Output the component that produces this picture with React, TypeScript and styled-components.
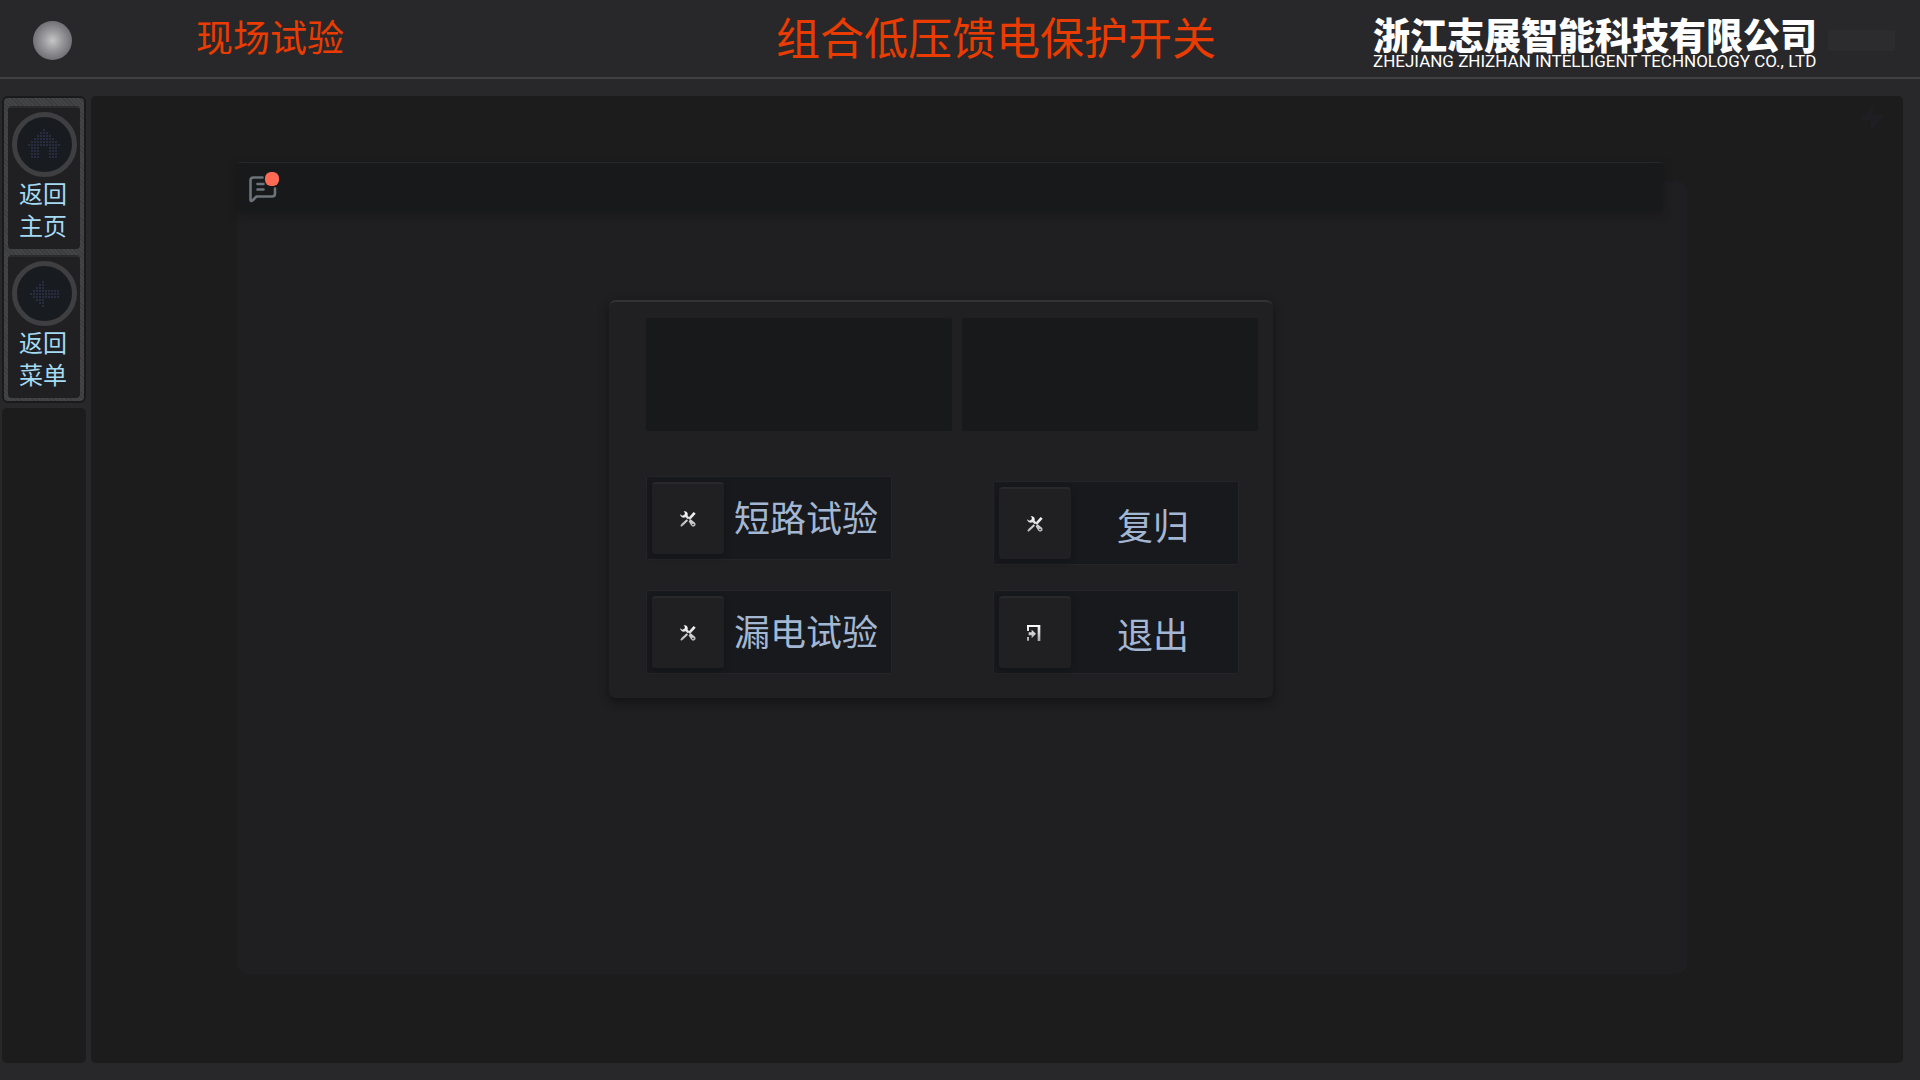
import React from "react";
import styled, { createGlobalStyle } from "styled-components";

const GlobalStyle = createGlobalStyle`
  * { box-sizing: border-box; }
  body {
    margin: 0;
    background: #28282a;
    font-family: "Noto Sans CJK SC", sans-serif;
  }
  button { font: inherit; color: inherit; cursor: pointer; }
`;

const Page = styled.div`
  display: flex;
  flex-direction: column;
  min-height: 100vh;
`;

const Header = styled.header`
  display: flex;
  align-items: center;
  height: 79px;
  padding: 3px 25px 0 33px;
  border-bottom: 2px solid #404042;
  white-space: nowrap;
`;

const StatusLamp = styled.span`
  width: 39px;
  height: 39px;
  border-radius: 50%;
  background: radial-gradient(circle, #c6c6c8 0%, #99999c 35%, #505056 100%);
`;

const SectionTitle = styled.h2`
  margin: 0 0 0 124px;
  padding-bottom: 8px;
  font-size: 37px;
  line-height: 48px;
  font-weight: 400;
  color: #ea3b00;
`;

const MainTitle = styled.h1`
  margin: 0 157px 0 auto;
  padding-bottom: 8px;
  font-size: 44px;
  line-height: 56px;
  font-weight: 400;
  color: #ea3b00;
`;

const Company = styled.div`
  display: flex;
  flex-direction: column;
  width: 441px;
  padding-top: 5px;
  color: #ffffff;
`;

const CompanyName = styled.span`
  font-size: 37px;
  line-height: 37px;
  font-weight: 900;
`;

const CompanyLatin = styled.span`
  font-family: Roboto, sans-serif;
  font-size: 17px;
  line-height: 17px;
  font-weight: 400;
`;

const ClockSlot = styled.div`
  width: 67px;
  height: 21px;
  margin-left: 14px;
  background: #2c2c2e;
`;

const Body = styled.div`
  display: flex;
  flex: 1;
  gap: 5px;
  padding: 17px 17px 17px 2px;
`;

const Sidebar = styled.aside`
  display: flex;
  flex-direction: column;
  gap: 5px;
  width: 84px;
`;

const Nav = styled.nav`
  display: flex;
  flex-direction: column;
  gap: 6px;
  padding: 8px 4px 3px;
  border: 2px solid #1a1a1b;
  border-radius: 6px;
  background: repeating-linear-gradient(45deg, #3a3b3c 0 1px, #434446 1px 3px);
`;

const NavButton = styled.button`
  display: flex;
  flex-direction: column;
  align-items: center;
  height: 143px;
  padding: 4px 0 0;
  border: 0;
  border-top: 2px solid #2b2b2d;
  border-radius: 4px;
  background: #202022;
`;

const NavDisc = styled.span`
  display: flex;
  align-items: center;
  justify-content: center;
  width: 65px;
  height: 65px;
  border: 5px solid #3f3f41;
  border-radius: 50%;
  background: #181b20;
`;

const NavLabel = styled.span`
  padding-right: 2px;
  font-size: 24px;
  line-height: 32px;
  color: #a5daf3;
`;

const SidebarRest = styled.div`
  flex: 1;
  border-radius: 5px;
  background: #1c1c1c;
`;

const Main = styled.main`
  position: relative;
  display: flex;
  flex-direction: column;
  flex: 1;
  padding: 66px 216px 89px 146px;
  border-radius: 5px;
  background: #1c1c1c;
`;

const BoltMark = styled.svg`
  position: absolute;
  top: 9px;
  right: 18px;
`;

const MessageBar = styled.div`
  z-index: 1;
  display: flex;
  align-items: flex-start;
  height: 49px;
  margin-right: 24px;
  padding: 8px 12px;
  border-top: 1px solid #24272b;
  border-radius: 3px;
  background: #17191b;
  box-shadow: 0 4px 8px rgba(20, 20, 22, 0.5);
`;

const MessageButton = styled.button`
  display: flex;
  padding: 0;
  border: 0;
  background: none;
`;

const Card = styled.section`
  display: flex;
  flex: 1;
  align-items: flex-start;
  margin-top: -30px;
  padding: 119px 414px 119px 372px;
  border-radius: 10px;
  background: #1f1f21;
`;

const Dialog = styled.div`
  flex: 1;
  padding: 16px 15px 24px 37px;
  border-top: 2px solid #333336;
  border-radius: 7px;
  background: #202022;
  box-shadow: 0 4px 10px rgba(14, 14, 16, 0.7);
`;

const Readouts = styled.div`
  display: grid;
  grid-template-columns: 306fr 296fr;
  gap: 10px;
`;

const Readout = styled.div`
  height: 113px;
  border-radius: 2px;
  background: #18191b;
`;

const Actions = styled.div`
  display: flex;
  align-items: flex-end;
  justify-content: space-between;
  margin-top: 45px;
  padding-right: 19px;
`;

const ActionColumn = styled.div<{ $gap: number }>`
  display: flex;
  flex-direction: column;
  gap: ${(p) => p.$gap}px;
`;

const ActionButton = styled.button`
  display: flex;
  align-items: center;
  width: 246px;
  height: 84px;
  padding: 0 5px;
  border: 1px solid #252528;
  border-radius: 2px;
  background: #18191d;
`;

const ActionIcon = styled.span`
  display: flex;
  align-items: center;
  justify-content: center;
  width: 72px;
  height: 72px;
  border-top: 2px solid #29292b;
  border-radius: 4px;
  background: #202022;
  box-shadow: 0 3px 6px rgba(14, 14, 16, 0.4);
`;

const ActionLabel = styled.span<{ $low?: boolean }>`
  flex: 1;
  padding: ${(p) => (p.$low ? "2px 0 0 2px" : "0 0 4px 2px")};
  font-size: 36px;
  line-height: 48px;
  text-align: center;
  white-space: nowrap;
  color: #a3b7d2;
`;

const HOME_DOTS = [
  "     #     ",
  "    ###    ",
  "   #####   ",
  "  #######  ",
  " ######### ",
  "###########",
  " ###   ### ",
  " ###   ### ",
  " ###   ### ",
  " ###   ### ",
  "           ",
];

const ARROW_DOTS = [
  "    #     ",
  "   ##     ",
  "  ###     ",
  " #########",
  "##########",
  " #########",
  "  ###     ",
  "   ##     ",
  "    #     ",
];

function DotIcon({ rows }: { rows: string[] }) {
  const w = rows[0].length * 3 - 1;
  const h = rows.length * 3 - 1;
  return (
    <svg width={w} height={h} viewBox={`0 0 ${w} ${h}`} fill="#282c40" aria-hidden="true">
      {rows.flatMap((row, y) =>
        [...row].map((c, x) =>
          c === "#" ? <rect key={`${x}-${y}`} x={x * 3} y={y * 3} width="2" height="2" /> : null
        )
      )}
    </svg>
  );
}

function ToolsIcon() {
  const id = React.useId();
  return (
    <svg width="16" height="16" viewBox="0 0 48 48" aria-hidden="true">
      <defs>
        <linearGradient id={id} x1="0" y1="0" x2="0" y2="48" gradientUnits="userSpaceOnUse">
          <stop offset="0" stopColor="#ffffff" />
          <stop offset="1" stopColor="#b4b4b4" />
        </linearGradient>
      </defs>
      <g fill={`url(#${id})`}>
        <path d="M11 1C20 0 25 6 23 14L29 20L23 25L17 19C9 22 2 19 0 10L7 14L13 11L15 6Z" />
        <path d="M41 3L47 8L30 27L24 22Z" />
        <path d="M20 25L24 29L10 43L4 47L1 44L5 38Z" />
        <path fillRule="evenodd" d="M26 31L32 25L45 35C48 39 47 44 43 46C39 48 36 47 33 43ZM39 38A2 2 0 1 0 39 43A2 2 0 1 0 39 38Z" />
      </g>
    </svg>
  );
}

function ExitIcon() {
  const id = React.useId();
  return (
    <svg width="16" height="16" viewBox="0 0 48 48" aria-hidden="true">
      <defs>
        <linearGradient id={id} x1="0" y1="0" x2="0" y2="48" gradientUnits="userSpaceOnUse">
          <stop offset="0" stopColor="#ffffff" />
          <stop offset="1" stopColor="#a8a8a8" />
        </linearGradient>
      </defs>
      <g fill={`url(#${id})`}>
        <path d="M0 0H40V48H32V6H6V18H0Z" />
        <path d="M5 22H14V14L27 26L14 40V31H5Z" />
        <path d="M0 36H6V47H0Z" />
      </g>
    </svg>
  );
}

function MessageIcon() {
  return (
    <svg width="32" height="34" viewBox="0 0 32 34" fill="none" aria-hidden="true">
      <g stroke="#6b737b" strokeWidth="2.6" strokeLinecap="round" strokeLinejoin="round">
        <path d="M13.5 6.5H4.5Q1.5 6.5 1.5 9.5V29Q2 30.5 3.5 29.5L7.5 25.5H23Q26 25.5 26 22.5V17.5" />
        <path d="M8.5 13H14.5M8.5 18.5H14.5" />
      </g>
      <rect x="16" y="1" width="14" height="14" rx="6" fill="#ff6a55" />
    </svg>
  );
}

type ActionProps = { label: string; icon: React.ReactNode; low?: boolean };

function Action({ label, icon, low }: ActionProps) {
  return (
    <ActionButton type="button">
      <ActionIcon>{icon}</ActionIcon>
      <ActionLabel $low={low}>{label}</ActionLabel>
    </ActionButton>
  );
}

function NavItem({ lines, rows }: { lines: [string, string]; rows: string[] }) {
  return (
    <NavButton type="button">
      <NavDisc>
        <DotIcon rows={rows} />
      </NavDisc>
      <NavLabel>
        {lines[0]}
        <br />
        {lines[1]}
      </NavLabel>
    </NavButton>
  );
}

export default function App() {
  return (
    <Page>
      <GlobalStyle />
      <Header>
        <StatusLamp />
        <SectionTitle>现场试验</SectionTitle>
        <MainTitle>组合低压馈电保护开关</MainTitle>
        <Company>
          <CompanyName>浙江志展智能科技有限公司</CompanyName>
          <CompanyLatin>ZHEJIANG ZHIZHAN INTELLIGENT TECHNOLOGY CO., LTD</CompanyLatin>
        </Company>
        <ClockSlot />
      </Header>
      <Body>
        <Sidebar>
          <Nav>
            <NavItem lines={["返回", "主页"]} rows={HOME_DOTS} />
            <NavItem lines={["返回", "菜单"]} rows={ARROW_DOTS} />
          </Nav>
          <SidebarRest />
        </Sidebar>
        <Main>
          <BoltMark width="26" height="26" viewBox="0 0 26 26" aria-hidden="true">
            <path d="M15 0L0 15H11L12 26L26 10H14Z" fill="#1f1f23" />
          </BoltMark>
          <MessageBar>
            <MessageButton type="button" aria-label="消息">
              <MessageIcon />
            </MessageButton>
          </MessageBar>
          <Card>
            <Dialog>
              <Readouts>
                <Readout />
                <Readout />
              </Readouts>
              <Actions>
                <ActionColumn $gap={30}>
                  <Action label="短路试验" icon={<ToolsIcon />} />
                  <Action label="漏电试验" icon={<ToolsIcon />} />
                </ActionColumn>
                <ActionColumn $gap={25}>
                  <Action label="复归" icon={<ToolsIcon />} low />
                  <Action label="退出" icon={<ExitIcon />} low />
                </ActionColumn>
              </Actions>
            </Dialog>
          </Card>
        </Main>
      </Body>
    </Page>
  );
}
